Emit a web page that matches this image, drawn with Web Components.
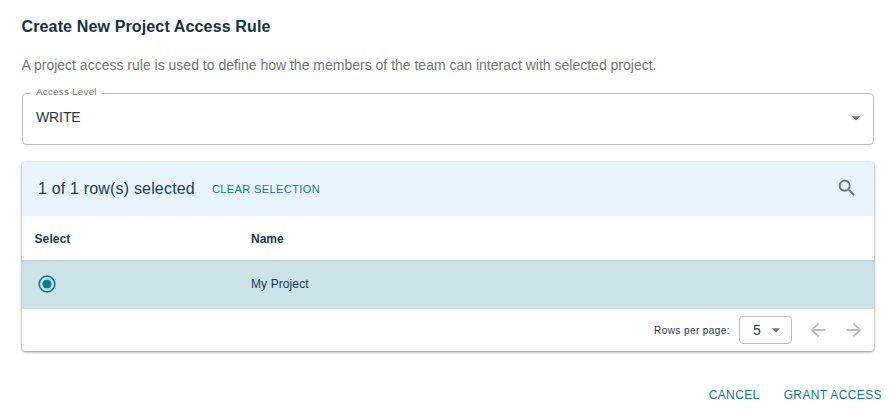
<!DOCTYPE html>
<html>
<head>
<meta charset="utf-8">
<title>Create New Project Access Rule</title>
<style>
    html, body { margin: 0; padding: 0; background: #fff; }
    body { font-family: "Liberation Sans", Arial, sans-serif; color: #123a4f; overflow: hidden; }
</style>
</head>
<body>
<rule-dialog heading="Create New Project Access Rule">
    <span slot="text">A project access rule is used to define how the members of the team can interact with selected project.</span>
    <outlined-select label="Access Level" value="WRITE"></outlined-select>
    <project-table></project-table>
    <text-button slot="actions">CANCEL</text-button>
    <text-button slot="actions">GRANT ACCESS</text-button>
</rule-dialog>

<script>
class RuleDialog extends HTMLElement {
    constructor(){
        super();
        this.attachShadow({ mode: 'open' });
        this.shadowRoot.innerHTML = `
            <style>
                :host { display: block; width: 896px; height: 418px; box-sizing: border-box; padding: 18px 22px 0 22px; }
                h2 { margin: 0 0 0 -0.5px; font-size: 16px; line-height: 18px; font-weight: 700; letter-spacing: 0.14px; color: #0f3347; }
                p { margin: 20px 0 0 -0.5px; font-size: 14px; line-height: 18px; letter-spacing: 0; color: #757575; }
                #body { display: flex; flex-direction: column; gap: 17px; margin-top: 19px; }
                #actions { display: flex; justify-content: flex-end; gap: 24px; margin: 37px -8px 0 0; }
            </style>
            <h2>${this.getAttribute('heading')}</h2>
            <p><slot name="text"></slot></p>
            <section id="body"><slot></slot></section>
            <section id="actions"><slot name="actions"></slot></section>
        `;
    }
}

class OutlinedSelect extends HTMLElement {
    constructor(){
        super();
        this.attachShadow({ mode: 'open' });
        this.shadowRoot.innerHTML = `
            <style>
                :host { display: block; position: relative; height: 52px; box-sizing: border-box; border: 1px solid #bdbdbd; border-radius: 4px; }
                #label { position: absolute; left: 8px; top: -8px; padding: 0 5px; background: #fff; font-size: 9.75px; line-height: 12px; letter-spacing: 0.28px; color: #757575; }
                #row { display: flex; align-items: center; justify-content: space-between; height: 100%; padding: 0 11px 5px 13px; box-sizing: border-box; }
                #value { font-size: 14px; line-height: 18px; letter-spacing: -0.1px; color: #123a4f; }
                svg { width: 20px; height: 20px; margin-right: -4px; margin-top: 2px; fill: #757575; }
            </style>
            <span id="label">${this.getAttribute('label')}</span>
            <div id="row">
                <span id="value">${this.getAttribute('value')}</span>
                <svg viewBox="0 0 24 24"><path d="M7 10l5 5 5-5z"/></svg>
            </div>
        `;
    }
}

class TextButton extends HTMLElement {
    constructor(){
        super();
        this.attachShadow({ mode: 'open' });
        this.shadowRoot.innerHTML = `
            <style>
                :host { display: inline-block; font-size: 12px; line-height: 14px; letter-spacing: 0.38px; color: #0a7c8c; cursor: pointer; white-space: nowrap; }
            </style>
            <slot></slot>
        `;
    }
}

class ProjectTable extends HTMLElement {
    constructor(){
        super();
        this.attachShadow({ mode: 'open' });
        this.shadowRoot.innerHTML = `
            <style>
                :host { display: block; height: 189px; border-radius: 4px; overflow: hidden; background: #fff; box-shadow: 0 1px 3px rgba(0,0,0,.45), 0 0 2px rgba(0,0,0,.12); }
                #toolbar { display: flex; align-items: center; height: 54px; padding: 0 16px; background: #e8f4fd; }
                #count { font-size: 16px; line-height: 20px; letter-spacing: 0.18px; color: #123f5a; }
                #clear { margin-left: 17px; font-size: 11px; letter-spacing: 0.4px; color: #0a7c8c; }
                #search { margin-left: auto; margin-top: -2px; width: 22px; height: 22px; fill: #66747b; }
                .row { display: grid; grid-template-columns: 229px 1fr; align-items: center; box-sizing: border-box; font-size: 12px; color: #123a4f; }
                #head { height: 44px; padding-top: 2px; font-weight: 700; }
                #head span:first-child { padding-left: 12.5px; letter-spacing: 0.1px; }
                #selected { height: 49px; padding-bottom: 2px; background: #cbe2e6; box-shadow: inset 0 3px 3px -2px rgba(0,0,0,.1); letter-spacing: 0.1px; }
                #selected svg { width: 18px; height: 18px; margin-left: 16px; display: block; }
                #foot { display: flex; align-items: center; justify-content: flex-end; height: 42px; padding-right: 9px; box-sizing: border-box; }
                #rows-label { font-size: 10px; letter-spacing: 0.42px; color: #123a4f; }
                #pager { display: flex; align-items: center; box-sizing: border-box; width: 53px; height: 28px; margin-left: 9px; padding-left: 13px; border: 1px solid #bdbdbd; border-radius: 4px; font-size: 14px; color: #123a4f; }
                #pager svg { width: 20px; height: 20px; margin-left: 5px; fill: #757575; }
                .arrow { width: 22px; height: 22px; fill: #bdbdbd; }
                .prev { margin-left: 15px; }
                .next { margin-left: 14px; }
            </style>
            <div id="toolbar">
                <span id="count">1 of 1 row(s) selected</span>
                <span id="clear">CLEAR SELECTION</span>
                <svg id="search" viewBox="0 0 24 24"><path d="M15.5 14h-.79l-.28-.27C15.41 12.59 16 11.11 16 9.5 16 5.91 13.09 3 9.5 3S3 5.91 3 9.5 5.91 16 9.5 16c1.61 0 3.09-.59 4.23-1.57l.27.28v.79l5 4.99L20.49 19l-4.99-5zm-6 0C7.01 14 5 11.99 5 9.5S7.01 5 9.5 5 14 7.01 14 9.5 11.99 14 9.5 14z"/></svg>
            </div>
            <div class="row" id="head"><span>Select</span><span>Name</span></div>
            <div class="row" id="selected">
                <svg viewBox="0 0 18 18"><circle cx="9" cy="9" r="7.8" fill="none" stroke="#0a7c8c" stroke-width="1.7"/><circle cx="9" cy="9" r="4.6" fill="#0a7c8c"/></svg>
                <span>My Project</span>
            </div>
            <div id="foot">
                <span id="rows-label">Rows per page:</span>
                <div id="pager"><span>5</span><svg viewBox="0 0 24 24"><path d="M7 10l5 5 5-5z"/></svg></div>
                <svg class="arrow prev" viewBox="0 0 24 24"><path d="M20 11H7.83l5.59-5.59L12 4l-8 8 8 8 1.41-1.41L7.83 13H20v-2z"/></svg>
                <svg class="arrow next" viewBox="0 0 24 24"><path d="M12 4l-1.41 1.41L16.17 11H4v2h12.17l-5.58 5.59L12 20l8-8z"/></svg>
            </div>
        `;
    }
}

window.customElements.define('rule-dialog', RuleDialog);
window.customElements.define('outlined-select', OutlinedSelect);
window.customElements.define('text-button', TextButton);
window.customElements.define('project-table', ProjectTable);
</script>
</body>
</html>
